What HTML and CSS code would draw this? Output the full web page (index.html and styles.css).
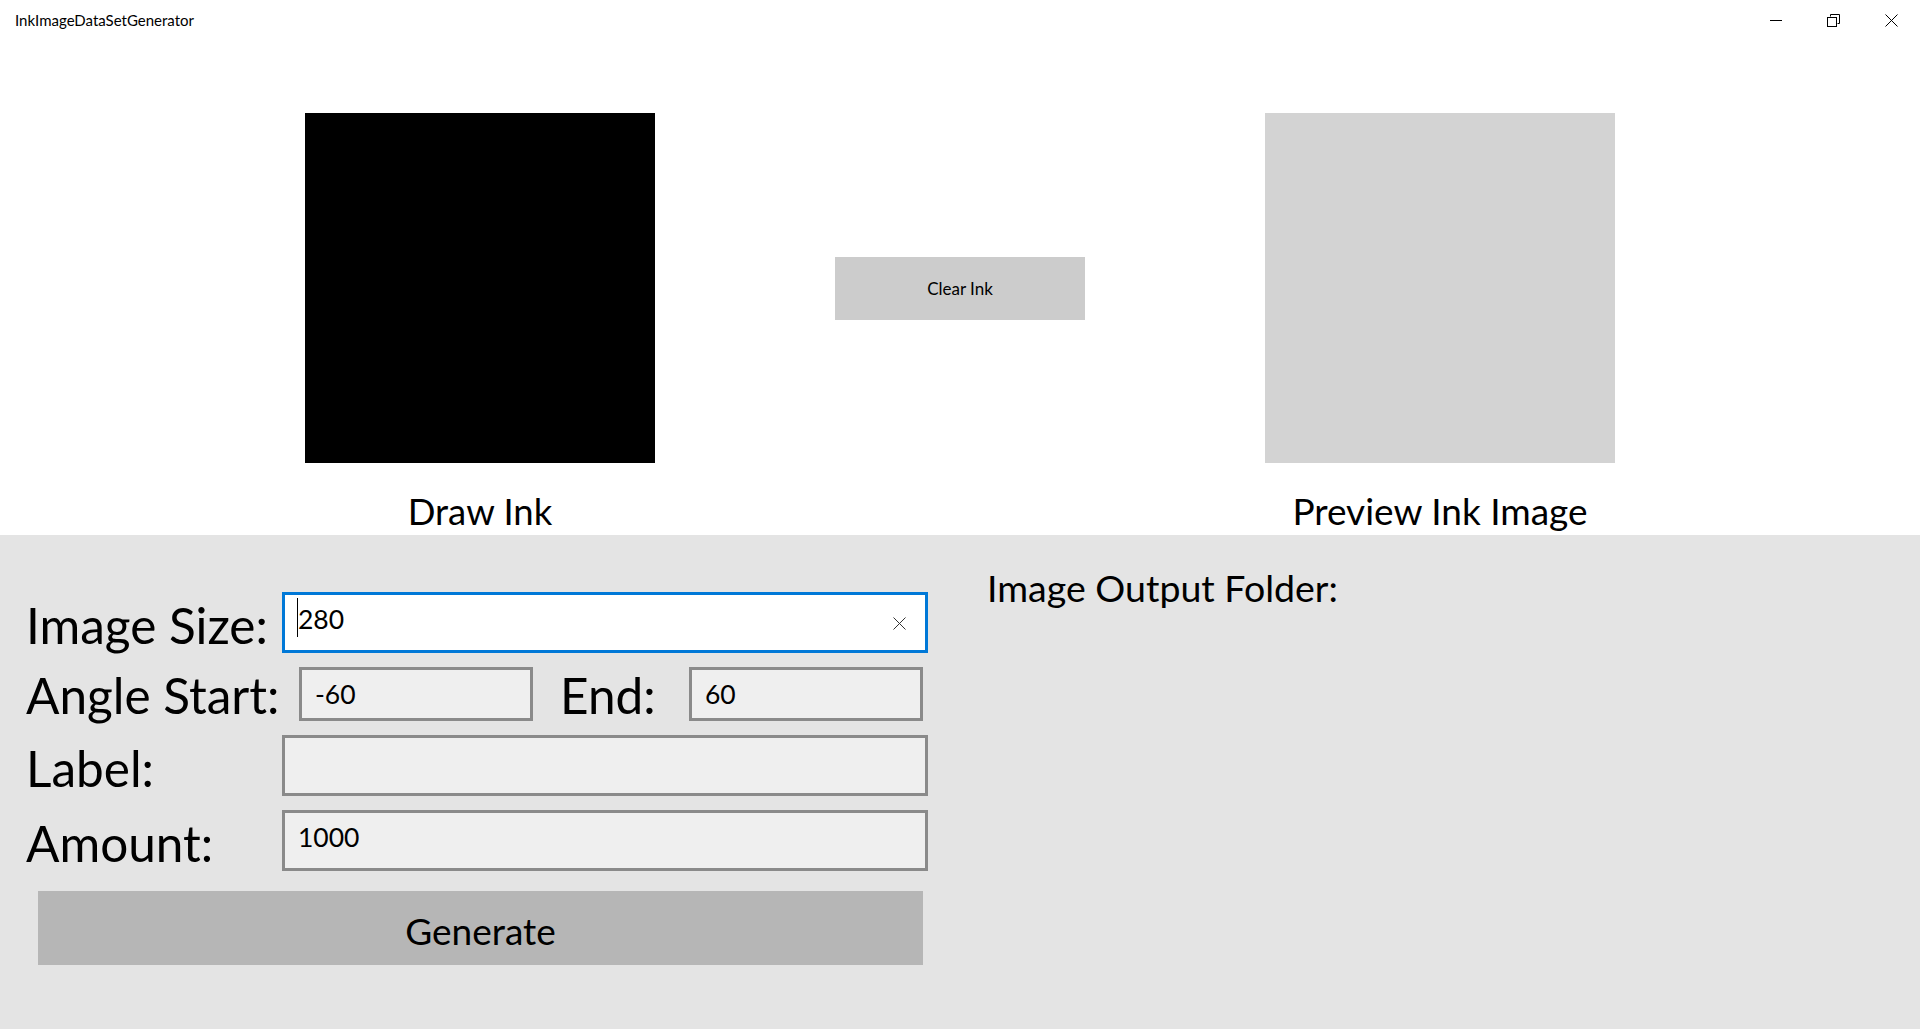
FILE: index.html
```html
<!DOCTYPE html>
<html lang="en">
<head>
<meta charset="utf-8">
<title>InkImageDataSetGenerator</title>
<link rel="stylesheet" href="styles.css">
</head>
<body>
<div class="window">
  <header class="titlebar">
    <span class="title">InkImageDataSetGenerator</span>
    <div class="controls">
      <div class="ctrl"><svg width="12" height="12" viewBox="0 0 12 12"><path d="M0 6.5H12" stroke="#000" stroke-width="1"/></svg></div>
      <div class="ctrl"><svg width="13" height="13" viewBox="0 0 13 13"><path d="M3.5 2.5V0.5H12.5V9.5H10.5" fill="none" stroke="#000" stroke-width="1"/><rect x="0.5" y="3.5" width="9" height="9" fill="none" stroke="#000" stroke-width="1"/></svg></div>
      <div class="ctrl"><svg width="13" height="13" viewBox="0 0 13 13"><path d="M0.5 0.5L12.5 12.5M12.5 0.5L0.5 12.5" stroke="#000" stroke-width="1"/></svg></div>
    </div>
  </header>
  <section class="top">
    <div class="canvas ink"></div>
    <div class="mid"><button class="clear">Clear Ink</button></div>
    <div class="canvas preview"></div>
    <div class="caption cap-left">Draw Ink</div>
    <div class="caption cap-right">Preview Ink Image</div>
  </section>
  <section class="bottom">
    <div class="form">
      <div class="row">
        <span class="lbl w-size">Image Size:</span>
        <div class="box focused wide"><span class="caret"></span><span class="val">280</span>
          <svg class="clearx" width="13" height="13" viewBox="0 0 13 13"><path d="M0.5 0.5L12.5 12.5M12.5 0.5L0.5 12.5" stroke="#333" stroke-width="1"/></svg>
        </div>
      </div>
      <div class="row row-angle">
        <span class="lbl w-angle">Angle Start:</span>
        <div class="box small"><span class="val">-60</span></div>
        <span class="lbl w-end">End:</span>
        <div class="box small"><span class="val">60</span></div>
      </div>
      <div class="row">
        <span class="lbl w-size">Label:</span>
        <div class="box wide"><span class="val"></span></div>
      </div>
      <div class="row">
        <span class="lbl w-size">Amount:</span>
        <div class="box wide"><span class="val">1000</span></div>
      </div>
      <button class="generate">Generate</button>
    </div>
    <div class="output">
      <div class="output-title">Image Output Folder:</div>
    </div>
  </section>
</div>
</body>
</html>
```
FILE: styles.css
```css
* { box-sizing: border-box; }
html, body { margin: 0; padding: 0; }
body {
  width: 1920px;
  height: 1029px;
  overflow: hidden;
  background: #fff;
  font-family: "Lato", "Open Sans", sans-serif;
  color: #000;
}
.window { display: flex; flex-direction: column; height: 1029px; }

.titlebar {
  height: 40px;
  display: flex;
  align-items: flex-start;
  justify-content: space-between;
  background: #fff;
}
.title { font-size: 15px; line-height: 15px; padding: 13px 0 0 15px; }
.controls { display: flex; }
.ctrl {
  width: 57.5px; height: 40px;
  display: flex; align-items: center; justify-content: center;
}

.top {
  height: 495px;
  display: grid;
  grid-template-columns: 1fr 2fr 2fr 2fr 1fr;
  grid-template-rows: 350px auto;
  padding-top: 73px;
  background: #fff;
}
.canvas { width: 350px; height: 350px; justify-self: center; }
.ink { background: #000; grid-column: 2; grid-row: 1; }
.preview { background: #d3d3d3; grid-column: 4; grid-row: 1; }
.mid { grid-column: 3; grid-row: 1; display: flex; align-items: center; justify-content: center; }
.clear {
  width: 250px; height: 63px;
  border: 0; background: #cccccc;
  font-family: inherit; font-size: 17px; color: #000;
  display: flex; align-items: center; justify-content: center;
}
.caption { font-size: 36.5px; line-height: 36.5px; text-align: center; margin-top: 30px; grid-row: 2; white-space: nowrap; }
.cap-left { grid-column: 2; }
.cap-right { grid-column: 4; font-size: 37px; }

.bottom {
  flex: 1;
  background: #e4e4e4;
  display: grid;
  grid-template-columns: 960px 1fr;
}
.form {
  padding: 57px 0 0 26px;
  display: flex; flex-direction: column;
  gap: 14px;
}
.row { display: flex; align-items: flex-end; }
.lbl { font-size: 49.5px; line-height: 49.5px; white-space: nowrap; padding-bottom: 3px; }
.w-size { width: 256px; }
.w-angle { width: 273px; }
.w-end { width: 129px; margin-left: 27px; }
.row-angle .lbl { padding-bottom: 0.5px; }

.box {
  position: relative;
  height: 61px;
  border: 3px solid #8a8a8a;
  background: #efefef;
  padding: 10.5px 0 0 13px;
  font-size: 26.5px; line-height: 26.5px;
}
.wide { width: 646px; }
.small { width: 234px; height: 54px; }
.focused { border-color: #0078d7; background: #fff; }
.caret { position: absolute; left: 12px; top: 3px; width: 1px; height: 39px; background: #000; }
.clearx { position: absolute; right: 19px; top: 22px; }

.generate {
  margin: 6px 0 0 12px;
  width: 885px; height: 74px;
  border: 0; background: #b6b6b6;
  font-family: inherit; font-size: 37px; color: #000;
  padding: 4px 0 0;
}

.output { padding: 34px 0 0 27px; }
.output-title { font-size: 37.5px; line-height: 37.5px; }
```
